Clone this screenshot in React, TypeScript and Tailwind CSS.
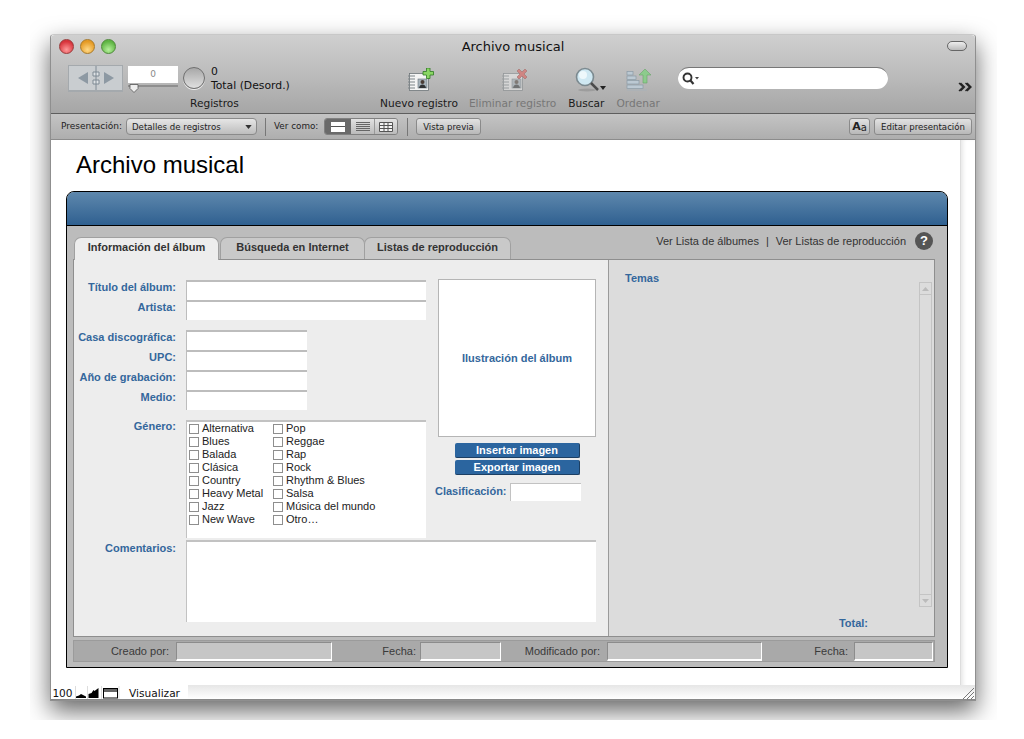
import React from "react";

const toolbarFont = { fontFamily: '"DejaVu Sans", sans-serif' };

function RecordIcon({ dim, badge }: { dim?: boolean; badge: "plus" | "x" }) {
  return (
    <svg width="26" height="23" viewBox="0 0 26 23" className={dim ? "opacity-50" : ""}>
      <rect x="1.5" y="5.5" width="19" height="17" fill="#f4f4f4" stroke="#6d7478" strokeWidth="0.8" />
      {[8, 11, 14, 17, 20].map((y) => (
        <path key={y} d={`M0 ${y}h7`} stroke="#7d8488" strokeWidth="1" />
      ))}
      <rect x="10" y="11" width="9" height="9" fill="#a8b4bc" stroke="#66727a" strokeWidth="0.6" />
      <circle cx="14.5" cy="14" r="2" fill="#4a3d36" />
      <path d="M11 20c.5-3 2-3.5 3.5-3.5s3 .5 3.5 3.5z" fill="#2f3234" />
      {badge === "plus" ? (
        <path d="M15 3.5h3.5V0h3.5v3.5h3.5V7H22v3.500h-3.500V7H15z" fill="#8ad664" stroke="#2e7a23" strokeWidth="0.8" />
      ) : (
        <path d="M15 2l2-2 3 3 3-3 2 2-3 3 3 3-2 2-3-3-3 3-2-2 3-3z" transform="translate(0 1)" fill="#e2504a" stroke="#96302c" strokeWidth="0.7" />
      )}
    </svg>
  );
}

function ToolLabel({ children, dim, className }: { children: React.ReactNode; dim?: boolean; className: string }) {
  return (
    <span className={`text-[10.6px] leading-none whitespace-nowrap ${dim ? "text-[#777]" : "text-[#1a1a1a]"} ${className}`}>
      {children}
    </span>
  );
}

function Field({ className = "" }: { className?: string }) {
  return <div className={`h-5 bg-white border-t-2 border-l border-[#bdbdbd] ${className}`} />;
}

function Label({ children, className = "" }: { children: React.ReactNode; className?: string }) {
  return <div className={`h-5 text-right text-[11px] leading-[14px] font-bold text-[#34679c] ${className}`}>{children}</div>;
}

function Check({ label }: { label: string }) {
  return (
    <div className="flex items-center h-[13px] gap-[3px] text-[11px] leading-[13px] text-[#222] whitespace-nowrap">
      <span className="w-[10px] h-[10px] bg-white border border-[#8e8e8e] shrink-0" />
      {label}
    </div>
  );
}

function SmallBtn({ children, className = "" }: { children: React.ReactNode; className?: string }) {
  return (
    <div className={`h-[17px] flex items-center justify-center rounded-[3px] border border-[#8a8a8a] bg-gradient-to-b from-[#e2e2e2] to-[#b8b8b8] text-[8.6px] text-[#222] pt-px ${className}`}>
      {children}
    </div>
  );
}

function BlueBtn({ children }: { children: React.ReactNode }) {
  return (
    <div className="w-[125px] h-[15px] rounded-[2px] bg-[#2b659f] border-b border-r border-[#1c3f63] text-white text-[11px] font-bold leading-[14px] text-center">
      {children}
    </div>
  );
}

function FootField({ className }: { className: string }) {
  return <div className={`h-[19px] bg-[#c6c6c6] border-t border-l border-[#8c8c8c] border-b-2 border-r border-b-white border-r-white shrink-0 ${className}`} />;
}

function FootLabel({ children, className }: { children: React.ReactNode; className: string }) {
  return <span className={`text-right text-[11px] text-[#3a3a3a] shrink-0 ${className}`}>{children}</span>;
}

const col1 = ["Alternativa", "Blues", "Balada", "Clásica", "Country", "Heavy Metal", "Jazz", "New Wave"];
const col2 = ["Pop", "Reggae", "Rap", "Rock", "Rhythm & Blues", "Salsa", "Música del mundo", "Otro…"];

export default function App() {
  return (
    <div className="w-[1024px] h-[739px] bg-white overflow-hidden" style={{ fontFamily: '"Liberation Sans", Arial, sans-serif' }}>
      <div className="ml-[30px] mt-[15px] w-[967px] h-[705px] overflow-hidden pl-[20px] pt-[19px]">
        <div className="relative w-[926px] h-[667px] flex flex-col border border-[#8f8f8f] border-t-[#c8c8c8] rounded-t-[4px] bg-white shadow-[0_10px_24px_rgba(0,0,0,0.6)]">
          {/* Title + toolbar */}
          <div className="h-[79px] shrink-0 bg-gradient-to-b from-[#cfcfcf] via-[#bcbcbc] to-[#a6a6a6] rounded-t-[4px] border-b border-[#5e5e5e]" style={toolbarFont}>
            <div className="h-[22px] flex items-center pl-[8px] pr-[7px] relative">
              <div className="flex gap-[6px] mt-[1px]">
                <span className="w-[15px] h-[15px] rounded-full border border-[#9a3a3a] bg-[radial-gradient(circle_at_50%_75%,#ff9a9a,#d8343c_70%)]" />
                <span className="w-[15px] h-[15px] rounded-full border border-[#a87a2a] bg-[radial-gradient(circle_at_50%_75%,#ffd987,#e59a24_70%)]" />
                <span className="w-[15px] h-[15px] rounded-full border border-[#4e8a3a] bg-[radial-gradient(circle_at_50%_75%,#b6f09c,#5fb544_70%)]" />
              </div>
              <span className="flex-1 text-center text-[13px] text-[#111] ml-[-37px] mt-[1px]">Archivo musical</span>
              <span className="w-[20px] h-[10px] rounded-full border border-[#666] bg-gradient-to-b from-[#eee] to-[#bbb] mr-[1px]" />
            </div>

            <div className="flex h-[55px]">
              {/* Records block */}
              <div className="w-[329px] shrink-0 flex flex-col">
                <div className="flex h-[38px] pl-[17px] pt-[8px]">
                  <div className="w-[55px] h-[27px] bg-[#c9cdd0] border border-[#a4a9ad] border-b-2 flex items-center justify-center gap-[3px]">
                    <svg width="48" height="24" viewBox="0 0 48 24">
                      <path d="M16 6v12L6 12z" fill="#8d99a3" />
                      <path d="M32 6v12l10-6z" fill="#8d99a3" />
                      <path d="M24 0v24M21 6h6v4h-6zM21 14h6v4h-6z" stroke="#7e8a94" strokeWidth="1" fill="#dfe3e6" />
                    </svg>
                  </div>
                  <div className="w-[50px] ml-[5px] mt-px">
                    <div className="h-[17px] bg-white text-center text-[9px] leading-[16px] text-[#8a8a8a]">0</div>
                    <div className="relative h-[2px] mt-[2px] bg-[#8f8f8f]">
                      <svg className="absolute left-[1px] -top-[1px]" width="10" height="9" viewBox="0 0 10 9">
                        <path d="M1 .5h8v4L5 8.500 1 4.500z" fill="#eee" stroke="#555" strokeWidth="0.8" />
                      </svg>
                    </div>
                  </div>
                  <span className="w-[22px] h-[22px] rounded-full ml-[5px] mt-[2px] border border-[#6f6f6f] bg-gradient-to-b from-[#a8a8a8] to-[#e0e0e0] shadow-[0_1px_0_#eee]" />
                  <div className="ml-[6px] text-[10.8px] leading-[14px] text-[#111]">
                    <div>0</div>
                    <div>Total (Desord.)</div>
                  </div>
                </div>
                <ToolLabel className="ml-[139px] mt-[3px]">Registros</ToolLabel>
              </div>

              {/* Actions */}
              <div className="w-[301px] shrink-0 flex flex-col">
                <div className="flex h-[38px] pt-[11px]">
                  <div className="ml-[28px]"><RecordIcon badge="plus" /></div>
                  <div className="ml-[68px]"><RecordIcon dim badge="x" /></div>
                  <svg className="ml-[46px] -mt-[1px]" width="32" height="26" viewBox="0 0 32 26">
                    <circle cx="11" cy="10" r="8.500" fill="#cfe8f2" stroke="#7c8a90" strokeWidth="1.600" />
                    <circle cx="9" cy="8" r="4" fill="#eef8fb" />
                    <path d="M17 16l7 7" stroke="#4c4c4c" strokeWidth="2.500" />
                    <path d="M26 19h6l-3 4z" fill="#222" />
                    <ellipse cx="13" cy="23" rx="9" ry="1.500" fill="#000" opacity="0.12" />
                  </svg>
                  <svg className="ml-[20px]" width="26" height="23" viewBox="0 0 26 23">
                    <g fill="#bcc9d3" stroke="#8b9aa6" strokeWidth="0.7">
                      <rect x="1" y="3.500" width="6" height="3.500" />
                      <rect x="1" y="8" width="9" height="3.500" />
                      <rect x="1" y="12.500" width="12" height="3.500" />
                      <rect x="1" y="17" width="16" height="3.500" />
                    </g>
                    <path d="M1 22h20" stroke="#a8b2ba" strokeWidth="1" />
                    <path d="M19 1l6 6h-4v8h-4V7h-4z" fill="#8ccb8c" stroke="#6aa56a" strokeWidth="0.6" />
                  </svg>
                </div>
                <div className="flex mt-[3px]">
                  <ToolLabel className="ml-0">Nuevo registro</ToolLabel>
                  <ToolLabel dim className="ml-[11px]">Eliminar registro</ToolLabel>
                  <ToolLabel className="ml-[12px]">Buscar</ToolLabel>
                  <ToolLabel dim className="ml-[12px]">Ordenar</ToolLabel>
                </div>
              </div>

              {/* Search */}
              <div className="w-[210px] h-[22px] mt-[10px] ml-[-3px] shrink-0 rounded-full bg-white border-t border-[#777] flex items-center pl-[4px]">
                <svg width="18" height="13" viewBox="0 0 18 13">
                  <circle cx="5.500" cy="5.500" r="4" fill="none" stroke="#333" strokeWidth="1.900" />
                  <path d="M8.500 8.500l3 3.500" stroke="#333" strokeWidth="2.200" />
                  <path d="M13 5h4l-2 2.500z" fill="#444" />
                </svg>
              </div>
              <svg className="ml-[70px] mt-[25px]" width="14" height="10" viewBox="0 0 14 10">
                <path d="M1 1l4 4-4 4M7.500 1l4 4-4 4M2.500 1l4 4-4 4M9 1l4 4-4 4" fill="none" stroke="#222" strokeWidth="1.400" />
              </svg>
            </div>
          </div>

          {/* Status bar */}
          <div className="h-[26px] shrink-0 flex items-center bg-gradient-to-b from-[#c4c4c4] to-[#aeaeae] border-b border-[#8c8c8c] text-[9px] text-[#222] pl-[10px]" style={toolbarFont}>
            <span className="w-[65px] shrink-0 pt-px">Presentación:</span>
            <div className="w-[131px] h-[17px] rounded-[4px] border border-[#8a8a8a] bg-gradient-to-b from-[#e6e6e6] to-[#bdbdbd] flex items-center justify-between pl-[5px] pr-[4px] shrink-0 text-[8.6px]">
              <span className="pt-px">Detalles de registros</span>
              <svg width="7" height="4" viewBox="0 0 8 5"><path d="M0 0h8L4 5z" fill="#333" /></svg>
            </div>
            <span className="w-px h-[18px] bg-[#777] ml-[8px] shrink-0" />
            <span className="ml-[8px] w-[50px] shrink-0 pt-px text-[8.8px]">Ver como:</span>
            <div className="flex h-[17px] w-[74px] rounded-[3px] border border-[#808080] overflow-hidden shrink-0">
              <div className="w-[26px] bg-[#6a6a6a] flex items-center justify-center">
                <span className="w-[14px] h-[10px] bg-white border-y-0 flex flex-col justify-center"><span className="h-px bg-[#555]" /></span>
              </div>
              <div className="w-[24px] bg-gradient-to-b from-[#e2e2e2] to-[#bbb] border-r border-[#999] flex items-center justify-center">
                <svg width="14" height="10" viewBox="0 0 14 10"><path d="M0 .5h14M0 2.500h14M0 4.500h14M0 6.500h14M0 8.500h14" stroke="#666" strokeWidth="1" /></svg>
              </div>
              <div className="flex-1 bg-gradient-to-b from-[#e2e2e2] to-[#bbb] flex items-center justify-center">
                <svg width="14" height="10" viewBox="0 0 14 10"><path d="M.5.500h13v9H.5zM.5 3.500h13M.5 6.500h13M5 .5v9M9 .5v9" fill="#f4f4f4" stroke="#555" strokeWidth="1" /></svg>
              </div>
            </div>
            <span className="w-px h-[18px] bg-[#777] ml-[9px] shrink-0" />
            <SmallBtn className="w-[65px] ml-[8px] shrink-0">Vista previa</SmallBtn>
            <SmallBtn className="w-[21px] ml-auto shrink-0 text-[11px]"><span className="font-bold text-[11px]">A</span><span className="text-[10px]">a</span></SmallBtn>
            <SmallBtn className="w-[98px] ml-[4px] mr-[3px] shrink-0">Editar presentación</SmallBtn>
          </div>

          {/* Content */}
          <div className="flex-1 min-h-0 flex">
            <div className="w-[909px] shrink-0 pl-[15px]">
              <h1 className="pl-[10px] pt-[10px] h-[51px] text-[24px] leading-[30px] font-normal text-black">Archivo musical</h1>
              <div className="w-[882px] h-[477px] border border-black rounded-t-[8px] bg-[#bcbcbc] flex flex-col">
                <div className="h-[34px] shrink-0 rounded-t-[7px] bg-gradient-to-b from-[#5e88ad] to-[#2f6090] border-b border-black" />
                <div className="relative h-[33px] shrink-0 flex items-end pl-[7px]">
                  <div className="w-[145px] h-[23px] rounded-t-[7px] bg-[#ededed] border-t border-x border-[#a0a0a0] -mb-px z-10 text-center text-[11px] font-bold leading-[19px] text-[#333]">Información del álbum</div>
                  <div className="w-[145px] h-[22px] ml-[1px] rounded-t-[7px] bg-[#c9c9c9] border-t border-x border-[#a0a0a0] text-center text-[11px] font-bold leading-[18px] text-[#333]">Búsqueda en Internet</div>
                  <div className="w-[147px] h-[22px] -ml-px rounded-t-[7px] bg-[#c9c9c9] border-t border-x border-[#a0a0a0] text-center text-[11px] font-bold leading-[18px] text-[#333]">Listas de reproducción</div>
                  <div className="ml-auto self-start flex items-center mt-[6px] mr-[14px] text-[11px] text-[#333]">
                    <span>Ver Lista de álbumes</span>
                    <span className="mx-[7px]">|</span>
                    <span>Ver Listas de reproducción</span>
                    <span className="ml-[9px] w-[18px] h-[18px] rounded-full bg-[#555] text-white text-[13px] font-bold leading-[18px] text-center">?</span>
                  </div>
                </div>

                <div className="ml-[6px] w-[862px] h-[378px] shrink-0 flex border border-[#8e8e8e]">
                  {/* Left pane */}
                  <div className="w-[535px] shrink-0 bg-[#ededed] border-r border-[#9a9a9a] pt-[20px]">
                    <div className="flex">
                      <div className="w-[352px] shrink-0 grid grid-cols-[102px_1fr] gap-x-[10px] content-start">
                        <Label>Título del álbum:</Label>
                        <Field className="w-[240px]" />
                        <Label>Artista:</Label>
                        <Field className="w-[240px]" />
                        <div className="col-span-2 h-[10px]" />
                        <Label>Casa discográfica:</Label>
                        <Field className="w-[121px]" />
                        <Label>UPC:</Label>
                        <Field className="w-[121px]" />
                        <Label>Año de grabación:</Label>
                        <Field className="w-[121px]" />
                        <Label>Medio:</Label>
                        <Field className="w-[121px]" />
                        <div className="col-span-2 h-[10px]" />
                        <Label className="-mt-px">Género:</Label>
                        <div className="w-[240px] h-[118px] bg-white border-t-2 border-l border-[#c2c2c2] pl-[2px] pt-0 flex">
                          <div className="w-[84px] shrink-0">{col1.map((c) => <Check key={c} label={c} />)}</div>
                          <div>{col2.map((c) => <Check key={c} label={c} />)}</div>
                        </div>
                      </div>
                      <div className="w-[170px] shrink-0 flex flex-col ml-[12px] -mt-px">
                        <div className="w-[158px] h-[158px] bg-white border border-[#b5b5b5] flex items-center justify-center text-[11px] font-bold text-[#34679c]">Ilustración del álbum</div>
                        <div className="flex flex-col gap-[2px] mt-[6px] ml-[17px]">
                          <BlueBtn>Insertar imagen</BlueBtn>
                          <BlueBtn>Exportar imagen</BlueBtn>
                        </div>
                        <div className="flex mt-[8px] -ml-[3px]">
                          <div className="text-[11px] font-bold text-[#34679c] whitespace-nowrap">Clasificación:</div>
                          <div className="w-[71px] h-[18px] ml-[3px] bg-white border-t border-l border-[#c2c2c2]" />
                        </div>
                      </div>
                    </div>
                    <div className="flex mt-[2px]">
                      <Label className="w-[102px] pt-px">Comentarios:</Label>
                      <div className="w-[410px] h-[82px] ml-[10px] bg-white border-t-2 border-l border-[#c2c2c2]" />
                    </div>
                  </div>
                  {/* Right pane */}
                  <div className="flex-1 bg-[#dcdcdc] flex pt-[11px] pl-[16px] pr-[1px]">
                    <div className="flex-1 flex flex-col justify-between">
                      <div className="text-[11px] font-bold text-[#34679c] leading-[14px]">Temas</div>
                      <div className="text-[11px] font-bold text-[#34679c] text-right leading-[14px] mb-[6px] mr-[51px]">Total:</div>
                    </div>
                    <div className="w-[13px] h-[325px] mt-[11px] mr-[1px] border border-[#c4c4c4] flex flex-col">
                      <div className="h-[12px] border-b border-[#c4c4c4] flex items-center justify-center">
                        <svg width="7" height="4" viewBox="0 0 7 4"><path d="M3.500 0L7 4H0z" fill="#bbb" /></svg>
                      </div>
                      <div className="flex-1" />
                      <div className="h-[12px] border-t border-[#c4c4c4] flex items-center justify-center">
                        <svg width="7" height="4" viewBox="0 0 7 4"><path d="M0 0h7L3.500 4z" fill="#bbb" /></svg>
                      </div>
                    </div>
                  </div>
                </div>

                <div className="ml-[6px] w-[862px] mt-[3px] h-[22px] flex items-center bg-[#a9a9a9] border border-[#9b9b9b]">
                  <FootLabel className="w-[95px]">Creado por:</FootLabel>
                  <FootField className="w-[156px] ml-[7px]" />
                  <FootLabel className="w-[84px]">Fecha:</FootLabel>
                  <FootField className="w-[81px] ml-[4px]" />
                  <FootLabel className="w-[99px]">Modificado por:</FootLabel>
                  <FootField className="w-[155px] ml-[7px]" />
                  <FootLabel className="w-[86px]">Fecha:</FootLabel>
                  <FootField className="w-[79px] ml-[6px]" />
                </div>
              </div>
            </div>
            <div className="flex-1 bg-white shadow-[inset_4px_0_4px_-2px_rgba(0,0,0,0.1)] border-l border-[#ddd]" />
          </div>

          {/* Bottom bar */}
          <div className="absolute left-0 right-0 bottom-0 h-[15px] flex bg-gradient-to-b from-[#e6e6e6] to-white border-b border-[#888]" style={toolbarFont}>
            <div className="w-[137px] h-full bg-white flex items-center text-[10.6px] text-[#111]">
              <span className="w-[23px] text-center pt-[3px]">100</span>
              <svg width="46" height="13" viewBox="0 0 46 13" className="ml-[1px]">
                <path d="M1 12V10.500l3-1 2-1.500 2 1 3 1.500V12z" fill="#000" />
                <path d="M13.500 12V8l3-1 2-3 1 1 4-3v10z" fill="#000" />
                <rect x="28.500" y="2.500" width="14" height="9.500" fill="#fff" stroke="#000" strokeWidth="1" />
                <rect x="29" y="3" width="13" height="3" fill="#666" />
                <path d="M.5 0v13M12.500 0v13M26.500 0v13M44 0v13" stroke="#ddd" strokeWidth="1" />
              </svg>
              <span className="ml-[8px] pt-[3px]">Visualizar</span>
            </div>
          </div>
          <svg className="absolute right-0 bottom-0" width="14" height="14" viewBox="0 0 14 14">
            <path d="M2 13L13 2M6 13l7-7M10 13l3-3" stroke="#777" strokeWidth="1" />
          </svg>
        </div>
      </div>
    </div>
  );
}
